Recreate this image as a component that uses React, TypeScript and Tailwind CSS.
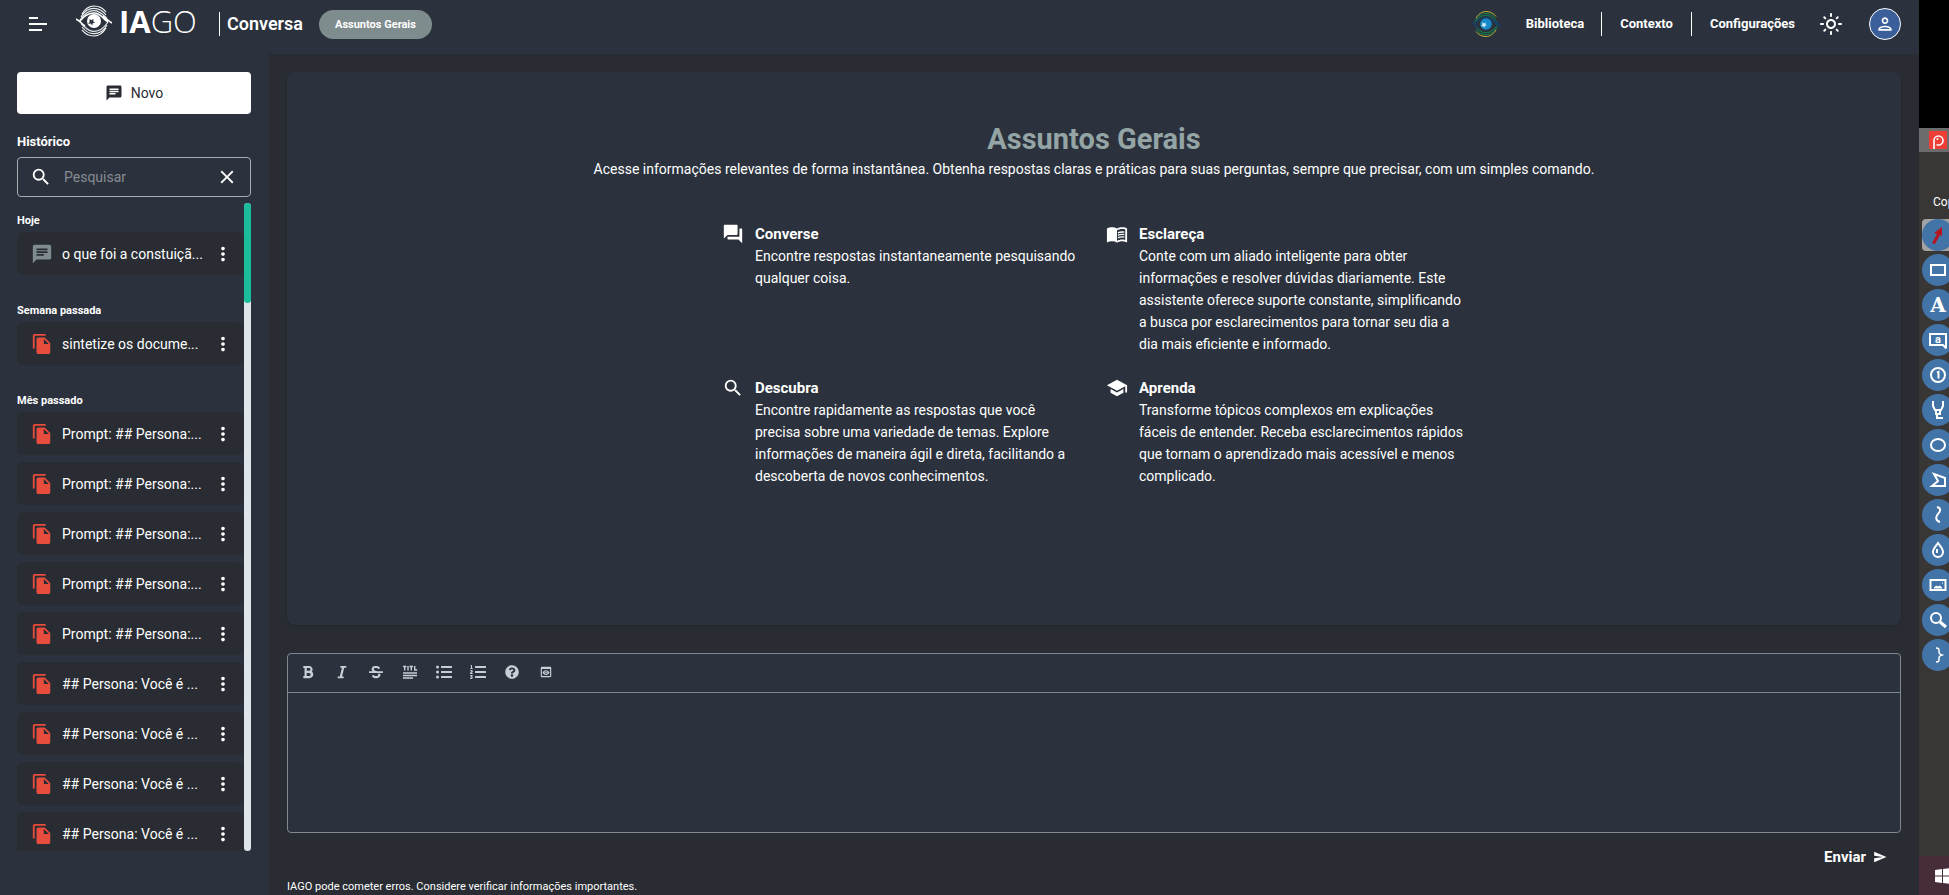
import React, { useState } from 'react';
import { FaBold, FaItalic, FaListOl, FaListUl, FaQuestionCircle, FaStrikethrough } from 'react-icons/fa';
import {
  MdChat,
  MdClose,
  MdFileCopy,
  MdMenuBook,
  MdMoreVert,
  MdOutlineLightMode,
  MdOutlinePerson,
  MdPreview,
  MdQuestionAnswer,
  MdSchool,
  MdSearch,
  MdSend,
} from 'react-icons/md';

type Chat = { title: string; kind: 'chat' | 'doc' };

const history: { label: string; chats: Chat[] }[] = [
  { label: 'Hoje', chats: [{ title: 'o que foi a constuiçã...', kind: 'chat' }] },
  { label: 'Semana passada', chats: [{ title: 'sintetize os docume...', kind: 'doc' }] },
  {
    label: 'Mês passado',
    chats: [
      { title: 'Prompt: ## Persona:...', kind: 'doc' },
      { title: 'Prompt: ## Persona:...', kind: 'doc' },
      { title: 'Prompt: ## Persona:...', kind: 'doc' },
      { title: 'Prompt: ## Persona:...', kind: 'doc' },
      { title: 'Prompt: ## Persona:...', kind: 'doc' },
      { title: '## Persona: Você é ...', kind: 'doc' },
      { title: '## Persona: Você é ...', kind: 'doc' },
      { title: '## Persona: Você é ...', kind: 'doc' },
      { title: '## Persona: Você é ...', kind: 'doc' },
    ],
  },
];

const features = [
  {
    icon: MdQuestionAnswer,
    title: 'Converse',
    text: 'Encontre respostas instantaneamente pesquisando qualquer coisa.',
  },
  {
    icon: MdMenuBook,
    title: 'Esclareça',
    text: 'Conte com um aliado inteligente para obter informações e resolver dúvidas diariamente. Este assistente oferece suporte constante, simplificando a busca por esclarecimentos para tornar seu dia a dia mais eficiente e informado.',
  },
  {
    icon: MdSearch,
    title: 'Descubra',
    text: 'Encontre rapidamente as respostas que você precisa sobre uma variedade de temas. Explore informações de maneira ágil e direta, facilitando a descoberta de novos conhecimentos.',
  },
  {
    icon: MdSchool,
    title: 'Aprenda',
    text: 'Transforme tópicos complexos em explicações fáceis de entender. Receba esclarecimentos rápidos que tornam o aprendizado mais acessível e menos complicado.',
  },
];

function EyeLogo({ className, outer, inner, lid, iris, star }: { className: string; outer: string; inner: string; lid: string; iris: string; star: string }) {
  return (
    <svg viewBox="0 0 36 32" className={className} fill="none" aria-hidden="true">
      <g strokeWidth="1.200">
        <path stroke={outer} d="M6 9C9 4 13 1 18 1s9 2 12 6" />
        <path stroke={inner} d="M5 12C8 6.500 13 3.300 18 3.300c5 0 9 2.700 12 6.700" />
        <path stroke={inner} d="M4 15C8 9 13 5.600 18 5.600c6 0 9 4.400 13 7.900" />
        <path stroke={outer} d="M30 23c-3 5-7 8-12 8s-9-2-12-6" />
        <path stroke={inner} d="M31 20c-3 5.500-8 8.700-13 8.700-5 0-9-2.700-12-6.700" />
        <path stroke={inner} d="M32 17c-4 6-9 9.400-14 9.400-6 0-9-4.400-13-7.900" />
      </g>
      <path stroke={lid} strokeWidth="1.600" d="M0 14c4 2 6 5 9 7M4 16c4-5 8-8 14-8 7 0 9 6 14 9M27 11c3 2 5 5 9 7" />
      <circle cx="18" cy="16" r="7" fill={iris} />
      <path fill={star} d="M13.500 14l1.800 1.300 2.200-1.500-.3 2.600 2 1.200-2.400.6-.6 2.400-1.500-2-2.700.2 1.600-1.800z" />
    </svg>
  );
}

// heading button of the editor toolbar: tiny caption over three lines
function TitleIcon() {
  return (
    <svg viewBox="0 0 16 14" className="h-3.5 w-4" aria-hidden="true">
      <path
        fill="none"
        stroke="currentColor"
        strokeWidth="1.400"
        d="M1 1.500h3.500M2.700 1v4.500M6 1v4.500M7.500 1.500h3.500M9.300 1v4.500M12.700 1v4h2.500"
      />
      <path stroke="currentColor" strokeWidth="1.700" d="M1 8h14M1 10.500h14M1 13h10" />
    </svg>
  );
}

const editorTools = [
  { label: 'Negrito', icon: <FaBold className="size-3.5" /> },
  { label: 'Itálico', icon: <FaItalic className="size-3.5" /> },
  { label: 'Tachado', icon: <FaStrikethrough className="size-3.5" /> },
  { label: 'Título', icon: <TitleIcon /> },
  { label: 'Lista', icon: <FaListUl className="size-4" /> },
  { label: 'Lista numerada', icon: <FaListOl className="size-4" /> },
  { label: 'Ajuda', icon: <FaQuestionCircle className="size-3.5" /> },
  { label: 'Visualizar', icon: <MdPreview className="size-3.5" /> },
];

const captureTools = [
  { label: 'Seta', art: <path d="M6 20l5-9-3-1 8-6 0 9-2-1-5 9z" fill="#b3161f" stroke="none" /> },
  { label: 'Retângulo', art: <path d="M5 7h14v10H5z" /> },
  { label: 'Texto', art: <text x="12" y="19" textAnchor="middle" className="font-['DejaVu_Serif'] text-[20px] font-bold" fill="#fff" stroke="none">A</text> },
  { label: 'Legenda', art: <><path d="M4 6h16v14l-3-3H4z" /><text x="12" y="15" textAnchor="middle" className="text-[11px] font-bold" fill="#fff" stroke="none">a</text></> },
  { label: 'Número', art: <><circle cx="12" cy="12" r="7" /><path d="M11 9.500l1.500-.5v6.500" /></> },
  { label: 'Marcador', art: <path d="M7 3v5l2 4h6l2-4V3M10 12v4h4v-4M11 16v4h6" /> },
  { label: 'Elipse', art: <ellipse cx="12" cy="12" rx="7" ry="6" /> },
  { label: 'Polígono', art: <path d="M8 6l11 4v8H6l6-5z" /> },
  { label: 'Curva', art: <path d="M11 4c4 1 4 4 1 7s-2 7 2 8" /> },
  { label: 'Desfoque', art: <><path d="M12 5c3 4 5 6 5 9a5 5 0 0 1-10 0c0-3 2-5 5-9z" /><path d="M11 11v4" /></> },
  { label: 'Imagem', art: <><path d="M4.500 7h15v10h-15z" /><path d="M8 15l2-2 2 1 2-1 2 2zM16 10h1" fill="#fff" strokeWidth="1" /></> },
  { label: 'Lupa', art: <><circle cx="10" cy="10" r="5" /><path d="M14 14l6 5" strokeWidth="3" /></> },
  { label: 'Chave', art: <path d="M10 5c3 0 3 1 3 3s0 3 3 4c-3 1-3 2-3 4s0 3-3 3" strokeWidth="1.500" /> },
];

function Header() {
  return (
    <header className="flex h-[54px] shrink-0 items-center justify-between bg-[#2b323d] pr-[18px] pb-1.5 pl-7">
      <div className="flex items-center">
        <button aria-label="Menu" className="w-12">
          <svg viewBox="0 0 20 16" className="h-4 w-5" stroke="currentColor" strokeWidth="2" aria-hidden="true">
            <path d="M1 2h9M1 8h18M1 14h13" />
          </svg>
        </button>
        <div className="mb-1.5 flex w-[143px] items-center gap-[7px]">
          <EyeLogo className="h-8 w-9" outer="#fff" inner="#e8ecef" lid="#fff" iris="#fff" star="#2b323d" />
          <span className="font-['Open_Sans',sans-serif] text-[31px] leading-8">
            <b className="font-bold">IA</b>
            <span className="font-light">GO</span>
          </span>
        </div>
        <h1 className="border-l border-white pl-[7px] text-lg leading-6 font-semibold">Conversa</h1>
        <span className="ml-4 rounded-full bg-[#7f8c8d] px-4 py-1.5 text-[11px] leading-[17px] font-bold">Assuntos Gerais</span>
      </div>
      <div className="flex items-center">
        <EyeLogo className="mr-[25px] h-7 w-[30px]" outer="#c2ae35" inner="#13824f" lid="#143f6b" iris="#1789c9" star="#d5ecf8" />
        <nav className="flex items-center text-[13px] leading-6 font-bold">
          <a href="#biblioteca" className="pr-[17px]">Biblioteca</a>
          <a href="#contexto" className="border-l border-white px-[18px]">Contexto</a>
          <a href="#configuracoes" className="border-l border-white pl-[18px]">Configurações</a>
        </nav>
        <button aria-label="Tema" className="ml-6">
          <MdOutlineLightMode className="size-6" />
        </button>
        <button aria-label="Perfil" className="ml-[26px] flex size-8 items-center justify-center rounded-full border border-white bg-[#3b5f9a]">
          <MdOutlinePerson className="size-5" />
        </button>
      </div>
    </header>
  );
}

function Sidebar() {
  const [query, setQuery] = useState('');

  return (
    <aside className="flex w-[269px] shrink-0 flex-col bg-[#2b323d] pt-[18px] pr-[18px] pb-11 pl-[17px]">
      <button className="flex h-[42px] shrink-0 items-center justify-center gap-2 rounded bg-white text-sm text-[#292d33]">
        <MdChat className="size-[18px]" />
        Novo
      </button>
      <label htmlFor="search" className="mt-[18px] text-[13px] leading-5 font-bold">Histórico</label>
      <div className="mt-[5px] flex h-10 shrink-0 items-center rounded border border-[#a9adb0] px-3">
        <MdSearch className="size-[22px] shrink-0" />
        <input
          id="search"
          value={query}
          onChange={(e) => setQuery(e.target.value)}
          placeholder="Pesquisar"
          className="ml-3 min-w-0 flex-1 bg-transparent text-sm outline-none placeholder:text-[#878c93]"
        />
        <button aria-label="Limpar" onClick={() => setQuery('')}>
          <MdClose className="size-[22px]" />
        </button>
      </div>
      <div className="mt-1.5 flex min-h-0 flex-1">
        <div className="min-w-0 flex-1 overflow-hidden pt-2.5">
          {history.map((group) => (
            <section key={group.label} className="mb-7">
              <h2 className="mb-[3px] text-[11px] leading-4 font-bold">{group.label}</h2>
              <ul className="flex flex-col gap-[7px]">
                {group.chats.map((chat, i) => (
                  <li key={i} className="flex h-[43px] items-center rounded-md bg-[#292d33] pr-2.5 pl-3.5">
                    {chat.kind === 'chat' ? (
                      <MdChat className="size-[22px] shrink-0 text-[#7f8c8d]" />
                    ) : (
                      <MdFileCopy className="size-[22px] shrink-0 text-[#e74c3c]" />
                    )}
                    <a href="#chat" className="ml-[9px] flex-1 text-sm whitespace-nowrap">{chat.title}</a>
                    <button aria-label="Opções">
                      <MdMoreVert className="size-[22px]" />
                    </button>
                  </li>
                ))}
              </ul>
            </section>
          ))}
        </div>
        <div className="w-[7px] rounded-full bg-[#dfe6e9]">
          <div className="h-[100px] rounded-full bg-[#1abc9c]" />
        </div>
      </div>
    </aside>
  );
}

function Welcome() {
  return (
    <section className="flex min-h-0 flex-1 flex-col items-center overflow-hidden rounded-lg bg-[#2b323d] pt-12 shadow-sm">
      <h2 className="text-[29px] leading-[38px] font-bold text-[#95a5a6]">Assuntos Gerais</h2>
      <p className="text-sm leading-[22px]">
        Acesse informações relevantes de forma instantânea. Obtenha respostas claras e práticas para suas perguntas, sempre que precisar, com um simples comando.
      </p>
      <div className="mt-[43px] grid w-full max-w-[768px] grid-cols-2 gap-y-[22px]">
        {features.map(({ icon: Icon, title, text }) => (
          <article key={title} className="flex gap-[11px] pl-3">
            <Icon className="size-[22px] shrink-0" />
            <div className="w-[326px]">
              <h3 className="text-[15px] leading-[22px] font-bold">{title}</h3>
              <p className="text-sm leading-[22px]">{text}</p>
            </div>
          </article>
        ))}
      </div>
    </section>
  );
}

function Editor() {
  return (
    <form className="mt-7 shrink-0" onSubmit={(e) => e.preventDefault()}>
      <div className="flex flex-col rounded border border-[#7f8890] bg-[#2b323d]">
        <div className="flex h-[39px] items-center border-b border-[#7f8890] pb-0.5 pl-[3px] text-[#c9ced4]">
          {editorTools.map((tool) => (
            <button key={tool.label} type="button" aria-label={tool.label} className="flex w-[34px] justify-center">
              {tool.icon}
            </button>
          ))}
        </div>
        <textarea aria-label="Mensagem" className="h-[139px] w-full resize-none bg-transparent p-3 text-sm outline-none" />
      </div>
      <div className="flex justify-end pt-3 pr-3.5">
        <button className="flex items-center gap-[7px] text-[15px] leading-6 font-bold">
          Enviar
          <MdSend className="size-3.5" />
        </button>
      </div>
    </form>
  );
}

function CaptureStrip() {
  return (
    <aside className="flex w-[30px] shrink-0 flex-col overflow-hidden bg-[#383736]">
      <div className="h-32 shrink-0 bg-black" />
      <div className="flex h-6 shrink-0 items-center bg-[#6b6c6b] pl-2.5">
        <svg viewBox="0 0 18 18" className="size-[18px] bg-[#ee3e36]" fill="none" stroke="#fff" strokeWidth="1.600" aria-hidden="true">
          <path d="M5 18V9.500a4.500 4.500 0 1 1 4.500 4.500H7.500" />
          <circle cx="8.500" cy="8" r="1" fill="#fff" stroke="none" />
        </svg>
      </div>
      <p className="mt-10 pl-3.5 text-xs leading-5 whitespace-nowrap">Cop</p>
      <div className="mt-[7px] flex shrink-0 flex-col gap-[3px] pl-[3px]">
        {captureTools.map((tool, i) => (
          <button
            key={tool.label}
            aria-label={tool.label}
            className={i === 0 ? 'size-8 shrink-0 rounded bg-[#a3a3a3]' : 'size-8 shrink-0'}
          >
            <svg viewBox="0 0 24 24" className="size-8 rounded-full bg-[#4374a8] p-1" fill="none" stroke="#fff" strokeWidth="2" aria-hidden="true">
              {tool.art}
            </svg>
          </button>
        ))}
      </div>
      <div className="mt-auto flex h-[39px] shrink-0 items-center bg-[#472c3a] pl-4">
        <svg viewBox="0 0 16 16" className="size-4 shrink-0" fill="#fff" aria-hidden="true">
          <path d="M0 2l7-1v6.500H0zM8 .9L16 0v7.500H8zM0 8.500h7V15l-7-1zM8 8.500h8V16l-8-1z" />
        </svg>
      </div>
    </aside>
  );
}

export default function App() {
  return (
    <div className="flex h-screen min-h-[700px] overflow-hidden bg-[#292d33] font-[Roboto,sans-serif] text-white">
      <div className="flex min-w-0 flex-1 flex-col">
        <Header />
        <div className="flex min-h-0 flex-1">
          <Sidebar />
          <main className="flex min-w-0 flex-1 flex-col px-[18px] pt-[18px]">
            <Welcome />
            <Editor />
            <p className="mt-2.5 text-[11px] leading-4">
              IAGO pode cometer erros. Considere verificar informações importantes.
            </p>
          </main>
        </div>
      </div>
      <CaptureStrip />
    </div>
  );
}
